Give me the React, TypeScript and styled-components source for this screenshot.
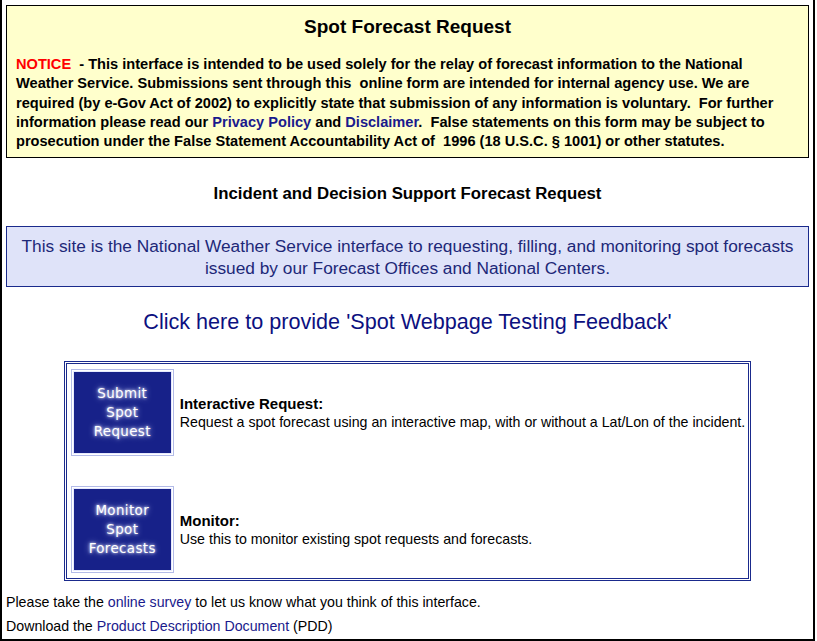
import React from "react";
import styled, { createGlobalStyle } from "styled-components";

const Global = createGlobalStyle`
  html, body { margin: 0; padding: 0; background: #fff; }
  body { font-family: "Liberation Sans", Arial, sans-serif; color: #000; }
  a { text-decoration: none; }
`;

const Page = styled.div`
  width: 815px;
  height: 641px;
  box-sizing: border-box;
  border: 2px solid #000;
  border-top: none;
  padding: 5px 4px 0 4px;
  display: flex;
  flex-direction: column;
`;

const NoticeBox = styled.section`
  background: #ffffcc;
  border: 1px solid #000;
  padding: 10px 9px 6px 9px;
`;

const Title = styled.h1`
  margin: 0 0 17px 0;
  font-size: 19px;
  line-height: 22px;
  font-weight: bold;
  text-align: center;
`;

const NoticeText = styled.p`
  margin: 0;
  font-size: 14.6px;
  line-height: 19.25px;
  font-weight: bold;
  white-space: nowrap;
`;

const Red = styled.span`
  color: #ff0000;
`;

const Link = styled.a`
  color: #1a1a8c;
`;

const SubHeading = styled.h2`
  margin: 26px 0 22px 0;
  font-size: 16.8px;
  line-height: 20px;
  font-weight: bold;
  text-align: center;
`;

const InfoBox = styled.div`
  background: #dfe3f9;
  border: 1px solid #1a2a8c;
  padding: 8px 4px 7px 4px;
  text-align: center;
  color: #1d2878;
  font-size: 17.3px;
  line-height: 22px;
  white-space: nowrap;
`;

const Feedback = styled.a`
  display: block;
  margin: 22px 0 26px 0;
  text-align: center;
  color: #0c1080;
  font-size: 21.6px;
  line-height: 26px;
`;

const Options = styled.div`
  align-self: center;
  border: 3px double #1a2a8c;
  padding: 5px 3px 5px 4px;
  display: flex;
  flex-direction: column;
  gap: 30px;
`;

const OptionRow = styled.div`
  display: flex;
  align-items: center;
  gap: 6px;
`;

const ButtonFrame = styled.a`
  display: block;
  width: 103px;
  height: 87px;
  box-sizing: border-box;
  border: 1px solid #b3bbe8;
  padding: 1px;
  background: #fff;
  flex: none;
`;

const ButtonFace = styled.div`
  box-sizing: border-box;
  width: 100%;
  height: 100%;
  background: #172189;
  border: 1px solid #e6e9ff;
  display: flex;
  align-items: center;
  justify-content: center;
  text-align: center;
  color: #fff;
  font-family: "DejaVu Sans", Verdana, sans-serif;
  font-size: 13.4px;
  line-height: 19px;
  letter-spacing: 0.4px;
  text-shadow: 0 0 3px #fff, 0 0 6px #b8c4ff;
`;

const OptionText = styled.div`
  display: flex;
  flex-direction: column;
  white-space: nowrap;
`;

const OptionTitle = styled.div`
  font-size: 15px;
  line-height: 19px;
  font-weight: bold;
`;

const OptionDesc = styled.div`
  font-size: 14.2px;
  line-height: 19px;
`;

const Footer = styled.div`
  margin-top: 9px;
  font-size: 14.2px;
  line-height: 24px;
`;

const FooterLine = styled.div``;

const options = [
  {
    label: ["Submit", "Spot", "Request"],
    title: "Interactive Request:",
    desc: "Request a spot forecast using an interactive map, with or without a Lat/Lon of the incident.",
  },
  {
    label: ["Monitor", "Spot", "Forecasts"],
    title: "Monitor:",
    desc: "Use this to monitor existing spot requests and forecasts.",
  },
];

export default function App() {
  return (
    <>
      <Global />
      <Page>
        <NoticeBox>
          <Title>Spot Forecast Request</Title>
          <NoticeText>
            <Red>NOTICE</Red>&nbsp; - This interface is intended to be used solely for the relay of forecast
            information to the National
            <br />
            Weather Service. Submissions sent through this&nbsp; online form are intended for internal agency
            use. We are
            <br />
            required (by e-Gov Act of 2002) to explicitly state that submission of any information is
            voluntary.&nbsp; For further
            <br />
            information please read our <Link href="#">Privacy Policy</Link> and{" "}
            <Link href="#">Disclaimer</Link>.&nbsp; False statements on this form may be subject to
            <br />
            prosecution under the False Statement Accountability Act of&nbsp; 1996 (18 U.S.C. § 1001) or other
            statutes.
          </NoticeText>
        </NoticeBox>

        <SubHeading>Incident and Decision Support Forecast Request</SubHeading>

        <InfoBox>
          This site is the National Weather Service interface to requesting, filling, and monitoring spot
          forecasts
          <br />
          issued by our Forecast Offices and National Centers.
        </InfoBox>

        <Feedback href="#">Click here to provide 'Spot Webpage Testing Feedback'</Feedback>

        <Options>
          {options.map((o) => (
            <OptionRow key={o.title}>
              <ButtonFrame href="#">
                <ButtonFace>
                  <div>
                    {o.label.map((l) => (
                      <div key={l}>{l}</div>
                    ))}
                  </div>
                </ButtonFace>
              </ButtonFrame>
              <OptionText>
                <OptionTitle>{o.title}</OptionTitle>
                <OptionDesc>{o.desc}</OptionDesc>
              </OptionText>
            </OptionRow>
          ))}
        </Options>

        <Footer>
          <FooterLine>
            Please take the <Link href="#">online survey</Link> to let us know what you think of this interface.
          </FooterLine>
          <FooterLine>
            Download the <Link href="#">Product Description Document</Link> (PDD)
          </FooterLine>
        </Footer>
      </Page>
    </>
  );
}
